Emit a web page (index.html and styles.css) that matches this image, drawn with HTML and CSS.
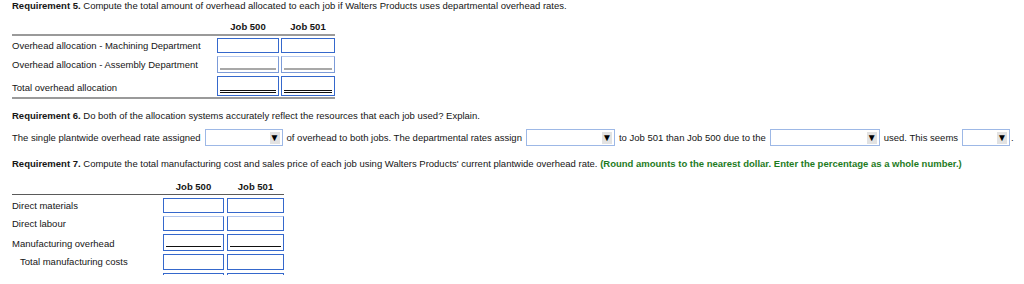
FILE: index.html
```html
<!DOCTYPE html>
<html>
<head>
<meta charset="utf-8">
<link rel="stylesheet" href="styles.css">
</head>
<body>
<div class="page">
  <p class="req r5"><b>Requirement 5.</b> Compute the total amount of overhead allocated to each job if Walters Products uses departmental overhead rates.</p>

  <div class="grid t1">
    <div class="hd"></div><div class="hd">Job 500</div><div class="hd">Job 501</div>
    <div class="rule"></div>
    <div class="cell lbl a">Overhead allocation - Machining Department</div><div class="cell in a"></div><div class="cell in a"></div>
    <div class="cell lbl b">Overhead allocation - Assembly Department</div><div class="cell in b soft"><span class="ul grey"></span></div><div class="cell in b soft"><span class="ul grey"></span></div>
    <div class="cell lbl c">Total overhead allocation</div><div class="cell in c"><span class="ul dbl"></span></div><div class="cell in c"><span class="ul dbl"></span></div>
    <div class="rule bot"></div>
  </div>

  <p class="req r6"><b>Requirement 6.</b> Do both of the allocation systems accurately reflect the resources that each job used? Explain.</p>

  <div class="sentence">
    <span>The single plantwide overhead rate assigned</span>
    <span class="sel s1"><span class="arrow">&#9660;</span></span>
    <span>of overhead to both jobs. The departmental rates assign</span>
    <span class="sel s2"><span class="arrow">&#9660;</span></span>
    <span>to Job 501 than Job 500 due to the</span>
    <span class="sel s3"><span class="arrow">&#9660;</span></span>
    <span>used. This seems</span>
    <span class="sel s4"><span class="arrow">&#9660;</span></span>
    <span class="dot">.</span>
  </div>

  <p class="req r7"><b>Requirement 7.</b> Compute the total manufacturing cost and sales price of each job using Walters Products' current plantwide overhead rate. <b class="note">(Round amounts to the nearest dollar. Enter the percentage as a whole number.)</b></p>

  <div class="grid t2">
    <div class="hd"></div><div class="hd">Job 500</div><div class="hd">Job 501</div>
    <div class="rule thin"></div>
    <div class="cell lbl r1">Direct materials</div><div class="cell in r1"></div><div class="cell in r1"></div>
    <div class="cell lbl r2">Direct labour</div><div class="cell in r2 softtop"></div><div class="cell in r2 softtop"></div>
    <div class="cell lbl r3">Manufacturing overhead</div><div class="cell in r3"><span class="ul single"></span></div><div class="cell in r3"><span class="ul single"></span></div>
    <div class="cell lbl r4 indent">Total manufacturing costs</div><div class="cell in r4"></div><div class="cell in r4"></div>
    <div class="cell lbl r5"></div><div class="cell in r5 cut"></div><div class="cell in r5 cut"></div>
  </div>
</div>
</body>
</html>
```
FILE: styles.css
```css
html, body {
  margin: 0;
  padding: 0;
  background: #fff;
}
body {
  font-family: "Liberation Sans", Arial, Helvetica, sans-serif;
  font-size: 9.5px;
  color: #151515;
}
.page {
  padding: 0 0 0 12px;
  height: 284px;
  overflow: hidden;
}
.req {
  margin: 0;
  line-height: 11px;
  white-space: nowrap;
}
.r6 { margin-top: 11px; }
.r7 { margin-top: 12px; }
.note { color: #1e7b1e; }

.grid {
  display: grid;
  align-items: start;
}
.t1 {
  grid-template-columns: 203px 62px 54px;
  column-gap: 2px;
  width: 324px;
  margin-top: 10px;
}
.t2 {
  grid-template-columns: 148px 61px 57px;
  column-gap: 3px;
  width: 272px;
  margin-top: 12px;
}
.hd {
  font-weight: bold;
  text-align: center;
  line-height: 11px;
  padding-bottom: 2px;
}
.rule {
  grid-column: 1 / -1;
  height: 2px;
  background: #9a9a9a;
}
.rule.thin {
  height: 1px;
  background: #5a5a5a;
}
.rule.bot { margin-top: 1px; }

.lbl {
  white-space: nowrap;
}
.lbl.indent { padding-left: 8px; }
.in {
  box-sizing: border-box;
  border: 1px solid #3568cc;
  background: #fff;
  position: relative;
}
.in.soft {
  border-color: #7c9bd8;
  border-top-color: #b7c9ee;
}
.in.softtop {
  border-top-color: #b3c7ee;
}

/* table 1 rows */
.t1 .a { height: 15px; line-height: 15px; margin-top: 2px; }
.t1 .b { height: 17px; line-height: 17px; margin-top: 3px; }
.t1 .c { height: 20px; line-height: 23px; margin-top: 3px; }

/* table 2 rows */
.t2 .r1 { height: 15px; line-height: 15px; margin-top: 3px; }
.t2 .r2 { height: 15px; line-height: 15px; margin-top: 3px; }
.t2 .r3 { height: 17px; line-height: 19px; margin-top: 3px; }
.t2 .r4 { height: 16px; line-height: 16px; margin-top: 3px; }
.t2 .r5 { height: 2px; margin-top: 3px; }
.t2 .in.cut { border-bottom: none; }

.ul {
  position: absolute;
  left: 2px;
  right: 2px;
}
.ul.grey {
  bottom: 2px;
  height: 2px;
  background: #a8a8a8;
}
.ul.dbl {
  bottom: 2px;
  height: 1px;
  border-top: 1px solid #111;
  border-bottom: 1px solid #111;
}
.ul.single {
  bottom: 3px;
  height: 1px;
  background: #111;
}

.sentence {
  display: flex;
  align-items: center;
  gap: 4px;
  margin-top: 8px;
  line-height: 11px;
  white-space: nowrap;
}
.sel {
  box-sizing: border-box;
  height: 17px;
  border: 1px solid #9db8e6;
  background: #fff;
  display: flex;
  justify-content: flex-end;
  align-items: center;
  padding-right: 2px;
}
.s1 { width: 78px; }
.s2 { width: 89px; }
.s3 { width: 110px; }
.s4 { width: 48px; }
.arrow {
  width: 10px;
  height: 12px;
  background: #e2e2e2;
  font-size: 10px;
  line-height: 12px;
  text-align: center;
  color: #000;
}
.dot { margin-left: -3px; }
```
